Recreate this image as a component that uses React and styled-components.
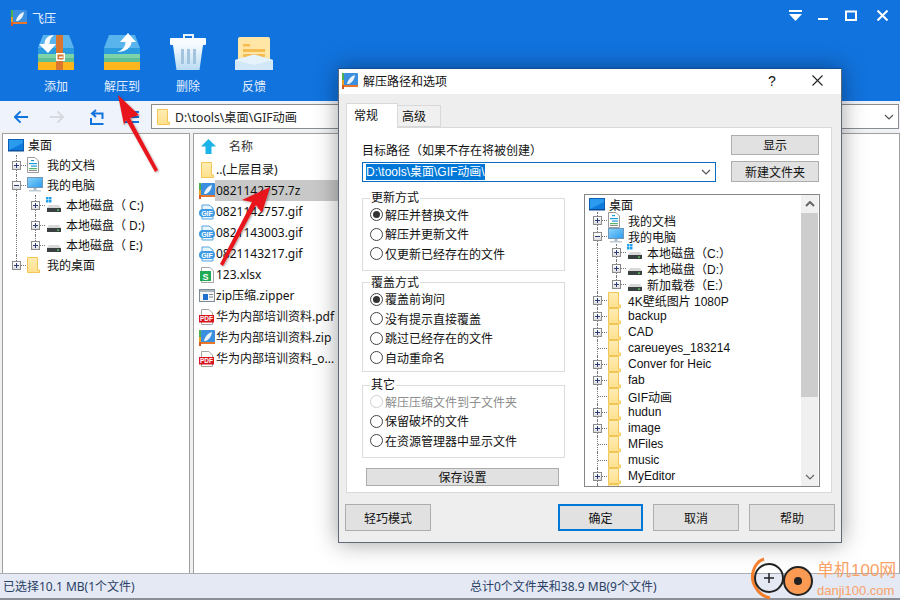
import React from 'react';
import styled, { createGlobalStyle } from 'styled-components';

const FONT = '"Noto Sans", "Noto Sans CJK SC", sans-serif';
const NARROW = '"Liberation Sans", "Noto Sans CJK SC", sans-serif';

const GlobalStyle = createGlobalStyle`
  html, body { margin: 0; padding: 0; background: #fff; }
  body { font-family: ${FONT}; font-size: 12px; color: #111; }
  * { box-sizing: border-box; }
`;

/* ---------- icons ---------- */

const ArchiveBody = () => (
  <>
    <path d="M5 2H31L36 15H0Z" fill="#59B3EC" />
    <rect x="0" y="15" width="36" height="6" fill="#2A9BDF" />
    <rect x="0" y="21" width="36" height="4" fill="#7FD3A8" />
    <rect x="0" y="25" width="36" height="4" fill="#5DBF95" />
    <rect x="0" y="29" width="36" height="8" fill="#FFB51E" />
  </>
);

const AddIcon = () => (
  <svg width="36" height="38" viewBox="0 0 36 38">
    <ArchiveBody />
    <rect x="18" y="2" width="7" height="35" fill="#D9762F" />
    <rect x="18" y="20" width="9" height="8" fill="#fff" />
    <rect x="19.5" y="21.5" width="6" height="5" fill="#D9762F" />
    <rect x="21" y="23.5" width="4" height="1.4" fill="#fff" />
    <path d="M16 2C10 2 6.500 6 6.500 11H1L10 20L18 11H11.500C11.500 7 13 4 16 2Z" fill="#fff" />
  </svg>
);

const ExtractIcon = () => (
  <svg width="36" height="38" viewBox="0 0 36 38">
    <ArchiveBody />
    <path d="M24 0L32 9H27.500C27.500 14 22 19 13 19C19 17 21.500 13 21.500 9H16Z" fill="#fff" />
  </svg>
);

const TrashIcon = () => (
  <svg width="36" height="38" viewBox="0 0 36 38">
    <defs>
      <linearGradient id="can" x1="0" y1="0" x2="0" y2="1">
        <stop offset="0" stopColor="#F4FAFE" />
        <stop offset="1" stopColor="#B9DBF3" />
      </linearGradient>
    </defs>
    <path d="M14 5V2H23V5" fill="none" stroke="#E9F4FC" strokeWidth="2" />
    <rect x="0" y="5" width="36" height="7" rx="1" fill="#F6FBFF" />
    <path d="M3 12H33L29.500 37H6.500Z" fill="url(#can)" />
    <rect x="11" y="16" width="3" height="15" fill="#A4C3DC" />
    <rect x="17" y="16" width="3" height="15" fill="#A4C3DC" />
    <rect x="23" y="16" width="3" height="15" fill="#A4C3DC" />
  </svg>
);

const FeedbackIcon = () => (
  <svg width="38" height="38" viewBox="0 0 38 38">
    <rect x="3" y="4" width="32" height="26" rx="2" fill="#FFE5A6" />
    <rect x="8" y="11" width="7" height="2.500" fill="#F5BC50" />
    <rect x="8" y="16" width="22" height="3" fill="#F5BC50" />
    <rect x="8" y="21" width="22" height="3" fill="#F5BC50" />
    <path d="M0 37V27L19 21.500L38 27V37Z" fill="#D2E8F9" />
    <path d="M0 27L19 21.500L38 27L19 32Z" fill="#F0F8FE" opacity=".7" />
  </svg>
);

const AppIcon = ({ size = 16 }) => (
  <svg width={size} height={size} viewBox="0 0 16 16">
    <rect x="0" y="0" width="2" height="7" fill="#4CB050" />
    <rect x="0" y="7" width="2" height="5" fill="#E9A21F" />
    <rect x="0" y="12" width="2" height="4" fill="#D85A22" />
    <rect x="2" y="0" width="14" height="14" rx="1" fill="#3C8FDE" />
    <rect x="2" y="12" width="14" height="2" fill="#E8762B" />
    <path d="M13 2C9 3 6 6.500 5 11C6 11 7 11 8 10.500C10.500 9 12.500 6 13 2Z" fill="#EAF4FC" />
  </svg>
);

const FolderIcon = () => (
  <svg width="13" height="16" viewBox="0 0 13 16">
    <defs>
      <linearGradient id="fold" x1="0" y1="0" x2="0" y2="1">
        <stop offset="0" stopColor="#FFEDB5" />
        <stop offset="1" stopColor="#FFE08C" />
      </linearGradient>
    </defs>
    <path d="M.5.500H10.500V13H12.500V15.500H.5Z" fill="url(#fold)" stroke="#F1C654" />
  </svg>
);

const DesktopIcon = () => (
  <svg width="16" height="13" viewBox="0 0 16 13">
    <rect x=".5" y=".5" width="15" height="11" fill="#2B9BF0" stroke="#0D5FB4" />
    <path d="M1 11L15 4V11Z" fill="#0E7BDC" />
    <rect x="0" y="11" width="16" height="1.500" fill="#0B4F99" />
  </svg>
);

const MonitorIcon = () => (
  <svg width="16" height="16" viewBox="0 0 16 16">
    <defs>
      <linearGradient id="scr" x1="0" y1="0" x2="1" y2="1">
        <stop offset="0" stopColor="#8AD4FA" />
        <stop offset="1" stopColor="#2B9BEE" />
      </linearGradient>
    </defs>
    <rect x=".5" y=".5" width="15" height="10" fill="url(#scr)" stroke="#6F97B8" />
    <rect x="6.500" y="11" width="3" height="2" fill="#A9B7C4" />
    <rect x="2" y="13" width="12" height="1.500" fill="#BFCAD4" />
  </svg>
);

const DocIcon = () => (
  <svg width="12" height="16" viewBox="0 0 12 16">
    <path d="M.5.500H8L11.500 4V15.500H.5Z" fill="#fff" stroke="#9A9A9A" />
    <rect x="4" y="3" width="3" height="1.200" fill="#1E9BDC" />
    <rect x="2" y="6" width="8" height="1.200" fill="#1E9BDC" />
    <rect x="4" y="8.500" width="6" height="1.200" fill="#1E9BDC" />
    <rect x="2" y="11" width="8" height="1.200" fill="#58B368" />
    <rect x="2" y="13" width="8" height="1" fill="#8A8A8A" />
  </svg>
);

const DriveIcon = ({ windows }) => (
  <svg width="16" height="16" viewBox="0 0 16 16">
    {windows && (
      <g fill="#1FA0EE">
        <rect x="0" y="0" width="2.500" height="2.500" />
        <rect x="3" y="0" width="2.500" height="2.500" />
        <rect x="0" y="3" width="2.500" height="2.500" />
        <rect x="3" y="3" width="2.500" height="2.500" />
      </g>
    )}
    <path d="M3 8H13L15 11H1Z" fill="#D8D8D8" />
    <rect x="1" y="11" width="14" height="4" fill="#3A3F42" />
    <rect x="11" y="12.500" width="2" height="1.200" fill="#5FDC6A" />
  </svg>
);

const GifIcon = () => (
  <svg width="16" height="16" viewBox="0 0 16 16">
    <path d="M3 1H10L14 4V15H3Z" fill="#E9F4FC" stroke="#55A5E0" />
    <rect x="0" y="5" width="16" height="8" rx="4" fill="#3C9BE4" />
    <text x="8" y="11.500" textAnchor="middle" fontSize="7" fontWeight="700" fontFamily="Liberation Sans" fill="#fff">GIF</text>
  </svg>
);

const SheetIcon = () => (
  <svg width="15" height="16" viewBox="0 0 15 16">
    <path d="M1.500.5H10L13.500 4V15.500H1.500Z" fill="#fff" stroke="#A5A5A5" />
    <rect x="0" y="4" width="11" height="10" fill="#1FAA54" />
    <text x="5.500" y="12.500" textAnchor="middle" fontSize="9" fontWeight="700" fontFamily="Liberation Sans" fill="#fff">S</text>
  </svg>
);

const ZipperIcon = () => (
  <svg width="16" height="13" viewBox="0 0 16 13">
    <rect x=".5" y=".5" width="15" height="12" fill="#F4F4F4" stroke="#7E8A96" />
    <rect x="1" y="1" width="14" height="2" fill="#A9B4BF" />
    <rect x="4" y="5" width="5" height="6" fill="#1E6FD0" />
    <rect x="10" y="5" width="4" height="1" fill="#7E8A96" />
    <rect x="10" y="7.500" width="4" height="1" fill="#7E8A96" />
  </svg>
);

const PdfIcon = () => (
  <svg width="16" height="16" viewBox="0 0 16 16">
    <path d="M2.500.5H10L13.500 4V15.500H2.500Z" fill="#fff" stroke="#A5A5A5" />
    <rect x="0" y="6" width="15" height="7.500" fill="#D8141C" />
    <text x="7.500" y="12.200" textAnchor="middle" fontSize="6.500" fontWeight="700" fontFamily="Liberation Sans" fill="#fff">PDF</text>
  </svg>
);

const UpArrowIcon = () => (
  <svg width="15" height="15" viewBox="0 0 15 15">
    <path d="M7.500 0L15 7.500H10.500V15H4.500V7.500H0Z" fill="#1CB3E8" />
  </svg>
);

const NavIcon = ({ kind }) => {
  const color = kind === 'forward' ? '#D6D9DE' : '#1173DE';
  if (kind === 'up') {
    return (
      <svg width="14" height="16" viewBox="0 0 14 16" fill="none" stroke={color} strokeWidth="2">
        <path d="M6 1L2 4.500L6 8M2 4.500H12.500V10" />
        <path d="M1 9V15H13.500" />
      </svg>
    );
  }
  if (kind === 'menu') {
    return (
      <svg width="14" height="14" viewBox="0 0 14 14" fill={color}>
        <rect x="0" y="1" width="14" height="2" />
        <rect x="0" y="6" width="14" height="2" />
        <rect x="0" y="11" width="14" height="2" />
      </svg>
    );
  }
  const d = kind === 'back' ? 'M7 1L1 7L7 13M1 7H15' : 'M9 1L15 7L9 13M15 7H1';
  return (
    <svg width="15" height="14" viewBox="0 0 16 14" fill="none" stroke={color} strokeWidth="2">
      <path d={d} />
    </svg>
  );
};

const Chevron = ({ up, color = '#555' }) => (
  <svg width="10" height="6" viewBox="0 0 10 6" fill="none" stroke={color} strokeWidth={up ? 2 : 1.200}>
    <path d={up ? 'M1 5L5 1L9 5' : 'M1 1L5 5L9 1'} />
  </svg>
);

/* ---------- main window ---------- */

const Page = styled.div`
  position: relative;
  width: 900px;
  height: 600px;
  overflow: hidden;
  display: flex;
  flex-direction: column;
  background: #f0f0f0;
`;

const Ribbon = styled.header`
  height: 101px;
  flex: none;
  background: #1173de;
  color: #fff;
  display: flex;
  flex-direction: column;
`;

const TitleBar = styled.div`
  height: 33px;
  flex: none;
  display: flex;
  align-items: center;
  padding: 3px 0 0 11px;
  gap: 5px;
`;

const TitleText = styled.span`
  color: #e8f2ff;
  flex: 1;
`;

const WinButtons = styled.div`
  display: flex;
  align-items: flex-start;
  align-self: flex-start;
  padding-top: 7px;
  padding-right: 12px;
`;

const WinButton = styled.svg`
  display: block;
  margin-left: ${(p) => p.$gap}px;
`;

const Tools = styled.div`
  display: flex;
  padding-left: 23px;
`;

const Tool = styled.div`
  width: 66px;
  display: flex;
  flex-direction: column;
  align-items: center;
  gap: 8px;
  color: #e6f0fc;
  svg { display: block; }
`;

const ToolLabel = styled.span`
  line-height: 16px;
`;

const AddressRow = styled.div`
  height: 30px;
  flex: none;
  display: flex;
  align-items: center;
  background: #eff3fb;
  padding: 1px 1px 0 0;
`;

const NavButton = styled.span`
  width: 35px;
  flex: none;
  display: flex;
  justify-content: center;
  margin-left: ${(p) => p.$gap || 0}px;
  svg { display: block; }
`;

const AddressBox = styled.div`
  flex: 1;
  margin-left: 2px;
  height: 25px;
  background: #fff;
  border: 1px solid #8c8c8c;
  display: flex;
  align-items: center;
  padding: 0 4px 0 5px;
  gap: 5px;
  svg { display: block; }
`;

const AddressText = styled.span`
  flex: 1;
  color: #222;
  font-size: 12.2px;
`;

const Panes = styled.div`
  flex: 1;
  min-height: 0;
  display: flex;
  gap: 3px;
  padding: 2px 0 0 2px;
  background: #f0f0f0;
`;

const Pane = styled.section`
  background: #fff;
  border: 1px solid #a0a0a0;
  border-bottom: 0;
  width: ${(p) => (p.$width ? `${p.$width}px` : 'auto')};
  flex: ${(p) => (p.$width ? 'none' : '1')};
  overflow: hidden;
`;

const TreeList = styled.div`
  padding: ${(p) => p.$pad};
`;

const Row = styled.div`
  display: flex;
  align-items: center;
  height: ${(p) => p.$height}px;
  white-space: nowrap;
`;

const Guide = styled.span`
  width: 19px;
  flex: none;
  align-self: stretch;
  position: relative;
  &::before {
    content: '';
    display: ${(p) => (p.$line ? 'block' : 'none')};
    position: absolute;
    left: 9px;
    top: 0;
    bottom: 0;
    border-left: 1px dotted #777;
  }
`;

const Branch = styled.span`
  width: 19px;
  flex: none;
  align-self: stretch;
  position: relative;
  &::before {
    content: '';
    position: absolute;
    left: 9px;
    top: 0;
    bottom: ${(p) => (p.$last ? '50%' : '0')};
    border-left: 1px dotted #777;
  }
  &::after {
    content: '';
    position: absolute;
    left: 10px;
    right: 0;
    top: 50%;
    border-top: 1px dotted #777;
  }
`;

const Toggle = styled.span`
  position: absolute;
  z-index: 1;
  left: 5px;
  top: calc(50% - 4px);
  width: 9px;
  height: 9px;
  border: 1px solid #8b8b8b;
  background: linear-gradient(#fff, #dedede);
  &::before {
    content: '';
    position: absolute;
    left: 1px;
    right: 1px;
    top: 3px;
    height: 1px;
    background: #2c3c78;
  }
  &::after {
    content: '';
    display: ${(p) => (p.$open ? 'none' : 'block')};
    position: absolute;
    top: 1px;
    bottom: 1px;
    left: 3px;
    width: 1px;
    background: #2c3c78;
  }
`;

const TreeIconCell = styled.span`
  width: 21px;
  flex: none;
  display: flex;
  padding-left: 1px;
  svg { display: block; }
`;

const TreeRow = ({ item, height }) => (
  <Row $height={height}>
    {(item.guides || []).map((on, i) => <Guide key={i} $line={on} />)}
    {item.branch && (
      <Branch $last={item.last}>
        {item.toggle && <Toggle $open={item.toggle === 'open'} />}
      </Branch>
    )}
    <TreeIconCell>{item.icon}</TreeIconCell>
    <span>{item.label}</span>
  </Row>
);

const ListHeader = styled.div`
  height: 24px;
  display: flex;
  align-items: center;
  padding-left: 7px;
  gap: 13px;
  color: #333;
  svg { display: block; }
`;

const FileList = styled.div`
  padding: 1px 0 0 5px;
`;

const FileRow = styled.div`
  height: 21px;
  display: flex;
  align-items: center;
  white-space: nowrap;
`;

const FileIconCell = styled.span`
  width: 16px;
  flex: none;
  display: flex;
  justify-content: center;
  svg { display: block; }
`;

const FileName = styled.span`
  padding-left: 1px;
  height: 21px;
  line-height: 21px;
  width: ${(p) => (p.$selected ? '300px' : 'auto')};
  background: ${(p) => (p.$selected ? '#c8c8c8' : 'transparent')};
`;

const StatusBar = styled.footer`
  height: 27px;
  flex: none;
  display: flex;
  align-items: center;
  background: #e4e9f4;
  border-top: 1px solid #a9adb4;
  border-bottom: 2px solid #8b9097;
  padding: 0 0 1px 3px;
  color: #2a3f66;
`;

const StatusText = styled.span`
  width: ${(p) => (p.$width ? `${p.$width}px` : 'auto')};
`;

/* ---------- dialog ---------- */

const Dialog = styled.div`
  position: absolute;
  left: 338px;
  top: 68px;
  width: 504px;
  height: 475px;
  background: #eeeeee;
  border: 1px solid #5e6a78;
  border-top-color: #0c4f96;
  box-shadow: 0 0 22px rgba(0, 0, 0, 0.38);
  display: flex;
  flex-direction: column;
`;

const DialogTitle = styled.div`
  height: 25px;
  flex: none;
  background: #fff;
  display: flex;
  align-items: center;
  padding: 0 0 2px 3px;
  gap: 5px;
  svg { display: block; }
`;

const DialogTitleText = styled.span`
  flex: 1;
`;

const HelpMark = styled.span`
  font-family: "Liberation Sans", sans-serif;
  font-size: 14px;
  width: 37px;
  margin-right: 2px;
  text-align: left;
`;

const CloseMark = styled.svg`
  margin-right: 18px;
`;

const DialogBody = styled.div`
  flex: 1;
  padding: 9px 9px 0 7px;
  display: flex;
  flex-direction: column;
`;

const Tabs = styled.div`
  display: flex;
  align-items: flex-end;
  height: 24px;
  flex: none;
  position: relative;
  z-index: 1;
`;

const Tab = styled.div`
  width: ${(p) => p.$width}px;
  height: ${(p) => (p.$active ? 25 : 22)}px;
  margin-bottom: ${(p) => (p.$active ? -1 : 0)}px;
  padding: ${(p) => (p.$active ? '0 0 2px 7px' : '0 0 0 4px')};
  background: ${(p) => (p.$active ? '#fff' : '#f0f0f0')};
  border: 1px solid #d9d9d9;
  border-bottom: ${(p) => (p.$active ? '0' : '1px solid #d9d9d9')};
  border-left: ${(p) => (p.$active ? '1px solid #d9d9d9' : '0')};
  display: flex;
  align-items: center;
`;

const TabPanel = styled.div`
  height: 366px;
  flex: none;
  width: 486px;
  background: #fff;
  border: 1px solid #d9d9d9;
  padding: 7px 0 0 15px;
`;

const TopRow = styled.div`
  display: flex;
  gap: 15px;
`;

const TargetCol = styled.div`
  width: 354px;
  padding-top: 9px;
`;

const TargetLabel = styled.div`
  line-height: 14px;
  margin-bottom: 4px;
`;

const Combo = styled.div`
  height: 20px;
  border: 1px solid #0b6cbf;
  display: flex;
  align-items: center;
  padding: 0 4px 0 3px;
  justify-content: space-between;
  svg { display: block; }
`;

const ComboSelection = styled.span`
  background: #0078d7;
  color: #fff;
  line-height: 16px;
  white-space: nowrap;
  font-family: ${NARROW};
`;

const SideButtons = styled.div`
  display: flex;
  flex-direction: column;
  width: 88px;
  gap: 6px;
`;

const Button = styled.div`
  height: ${(p) => p.$height || 20}px;
  width: ${(p) => (p.$width ? `${p.$width}px` : 'auto')};
  flex: none;
  background: #e1e1e1;
  border: ${(p) => (p.$primary ? '2px solid #0078d7' : '1px solid #adadad')};
  display: flex;
  align-items: center;
  justify-content: center;
  color: #111;
`;

const BottomRow = styled.div`
  display: flex;
  gap: 19px;
  margin-top: 9px;
`;

const OptionsCol = styled.div`
  width: 203px;
  display: flex;
  flex-direction: column;
`;

const Group = styled.fieldset`
  margin: ${(p) => p.$top}px 0 0;
  padding: 0 0 ${(p) => p.$bottom}px 7px;
  border: 1px solid #dcdcdc;
  min-width: 0;
`;

const Legend = styled.legend`
  padding: 0 1px;
  margin-left: 0;
  line-height: 14px;
`;

const Option = styled.div`
  height: 19.5px;
  display: flex;
  align-items: center;
  gap: 2px;
  color: ${(p) => (p.$disabled ? '#8d8d8d' : '#111')};
`;

const Radio = styled.span`
  width: 13px;
  height: 13px;
  flex: none;
  border-radius: 50%;
  border: 1px solid ${(p) => (p.$disabled ? '#cfcfcf' : '#444')};
  background: #fff;
  position: relative;
  &::after {
    content: '';
    display: ${(p) => (p.$checked ? 'block' : 'none')};
    position: absolute;
    inset: 2px;
    border-radius: 50%;
    background: #333;
  }
`;

const SaveButton = styled(Button)`
  margin: 10.5px 6px 0 4px;
`;

const FolderTree = styled.div`
  width: 236px;
  height: 293px;
  margin-top: 3px;
  border: 1px solid #858585;
  display: flex;
  overflow: hidden;
  font-family: ${NARROW};
`;

const FolderTreeInner = styled.div`
  flex: 1;
  min-width: 0;
  overflow: hidden;
`;

const ScrollBar = styled.div`
  width: 17px;
  flex: none;
  margin-right: 1px;
  background: #f0f0f0;
  display: flex;
  flex-direction: column;
  svg { display: block; }
`;

const ScrollEnd = styled.div`
  height: 18px;
  flex: none;
  display: flex;
  align-items: center;
  justify-content: center;
`;

const ScrollTrack = styled.div`
  flex: 1;
`;

const ScrollThumb = styled.div`
  height: 184px;
  background: #cdcdcd;
`;

const DialogFooter = styled.div`
  flex: 1;
  display: flex;
  align-items: flex-start;
  gap: 10px;
  padding-top: 11px;
  margin-left: -1px;
`;

const Spacer = styled.span`
  width: 107px;
  flex: none;
`;

/* ---------- overlays ---------- */

const Annotations = styled.svg`
  position: absolute;
  left: 0;
  top: 0;
  width: 900px;
  height: 600px;
  pointer-events: none;
`;

const Watermark = styled.div`
  position: absolute;
  left: 750px;
  top: 556px;
  display: flex;
  align-items: flex-start;
  svg { display: block; }
`;

const WatermarkText = styled.div`
  margin-left: 1px;
  color: #f9a268;
  display: flex;
  flex-direction: column;
  font-family: "Liberation Sans", "Noto Sans CJK SC", sans-serif;
`;

const WatermarkTitle = styled.span`
  font-size: 17px;
  line-height: 22px;
  margin-top: 4px;
  white-space: nowrap;
`;

const WatermarkUrl = styled.span`
  font-size: 13px;
  line-height: 16px;
  margin-top: 1px;
  white-space: nowrap;
`;

/* ---------- data ---------- */

const sideTree = [
  { icon: <DesktopIcon />, label: '桌面' },
  { branch: true, toggle: 'closed', icon: <DocIcon />, label: '我的文档' },
  { branch: true, toggle: 'open', icon: <MonitorIcon />, label: '我的电脑' },
  { guides: [true], branch: true, toggle: 'closed', icon: <DriveIcon windows />, label: '本地磁盘（ C:)' },
  { guides: [true], branch: true, toggle: 'closed', icon: <DriveIcon />, label: '本地磁盘（ D:)' },
  { guides: [true], branch: true, last: true, toggle: 'closed', icon: <DriveIcon />, label: '本地磁盘（ E:)' },
  { branch: true, last: true, toggle: 'closed', icon: <FolderIcon />, label: '我的桌面' },
];

const folder = (label, toggle) => ({ branch: true, toggle, icon: <FolderIcon />, label });

const dialogTree = [
  { icon: <DesktopIcon />, label: '桌面' },
  { branch: true, toggle: 'closed', icon: <DocIcon />, label: '我的文档' },
  { branch: true, toggle: 'open', icon: <MonitorIcon />, label: '我的电脑' },
  { guides: [true], branch: true, toggle: 'closed', icon: <DriveIcon windows />, label: '本地磁盘（C:）' },
  { guides: [true], branch: true, toggle: 'closed', icon: <DriveIcon />, label: '本地磁盘（D:）' },
  { guides: [true], branch: true, last: true, toggle: 'closed', icon: <DriveIcon />, label: '新加载卷（E:）' },
  folder('4K壁纸图片 1080P', 'closed'),
  folder('backup', 'closed'),
  folder('CAD', 'closed'),
  folder('careueyes_183214'),
  folder('Conver for Heic', 'closed'),
  folder('fab', 'closed'),
  folder('GIF动画'),
  folder('hudun', 'closed'),
  folder('image', 'closed'),
  folder('MFiles'),
  folder('music'),
  folder('MyEditor', 'closed'),
  folder(''),
];

const files = [
  { icon: <FolderIcon />, name: '..(上层目录)' },
  { icon: <AppIcon />, name: '0821142757.7z', selected: true },
  { icon: <GifIcon />, name: '0821142757.gif' },
  { icon: <GifIcon />, name: '0821143003.gif' },
  { icon: <GifIcon />, name: '0821143217.gif' },
  { icon: <SheetIcon />, name: '123.xlsx' },
  { icon: <ZipperIcon />, name: 'zip压缩.zipper' },
  { icon: <PdfIcon />, name: '华为内部培训资料.pdf' },
  { icon: <AppIcon />, name: '华为内部培训资料.zip' },
  { icon: <PdfIcon />, name: '华为内部培训资料_o...' },
];

const groups = [
  {
    title: '更新方式', top: 0, bottom: 6,
    options: [{ text: '解压并替换文件', checked: true }, { text: '解压并更新文件' }, { text: '仅更新已经存在的文件' }],
  },
  {
    title: '覆盖方式', top: 5, bottom: 3,
    options: [{ text: '覆盖前询问', checked: true }, { text: '没有提示直接覆盖' }, { text: '跳过已经存在的文件' }, { text: '自动重命名' }],
  },
  {
    title: '其它', top: 6.5, bottom: 6,
    options: [{ text: '解压压缩文件到子文件夹', disabled: true }, { text: '保留破坏的文件' }, { text: '在资源管理器中显示文件' }],
  },
];

const tools = [
  { icon: <AddIcon />, label: '添加' },
  { icon: <ExtractIcon />, label: '解压到' },
  { icon: <TrashIcon />, label: '删除' },
  { icon: <FeedbackIcon />, label: '反馈' },
];

export default function App() {
  return (
    <Page>
      <GlobalStyle />
      <Ribbon>
        <TitleBar>
          <AppIcon size={16} />
          <TitleText>飞压</TitleText>
          <WinButtons>
            <WinButton $gap={0} width="13" height="12" viewBox="0 0 13 12" fill="#fff">
              <rect x="0" y="0" width="13" height="2" />
              <path d="M0 4H13L6.500 11Z" />
            </WinButton>
            <WinButton $gap={16} width="10" height="12" viewBox="0 0 10 12" fill="#fff">
              <rect x="0" y="8" width="10" height="2" />
            </WinButton>
            <WinButton $gap={17} width="12" height="11" viewBox="0 0 12 11" fill="none" stroke="#fff">
              <rect x="1" y="1.500" width="10" height="8.500" strokeWidth="2" />
            </WinButton>
            <WinButton $gap={20} width="11" height="11" viewBox="0 0 11 11" fill="none" stroke="#fff" strokeWidth="2">
              <path d="M.5.500L10.500 10.500M10.500.5L.5 10.500" />
            </WinButton>
          </WinButtons>
        </TitleBar>
        <Tools>
          {tools.map((t) => (
            <Tool key={t.label}>
              {t.icon}
              <ToolLabel>{t.label}</ToolLabel>
            </Tool>
          ))}
        </Tools>
      </Ribbon>

      <AddressRow>
        <NavButton $gap={4}><NavIcon kind="back" /></NavButton>
        <NavButton><NavIcon kind="forward" /></NavButton>
        <NavButton $gap={5}><NavIcon kind="up" /></NavButton>
        <NavButton><NavIcon kind="menu" /></NavButton>
        <AddressBox>
          <FolderIcon />
          <AddressText>D:\tools\桌面\GIF动画</AddressText>
          <Chevron />
        </AddressBox>
      </AddressRow>

      <Panes>
        <Pane $width={188}>
          <TreeList $pad="1px 0 0 4px">
            {sideTree.map((item) => <TreeRow key={item.label} item={item} height={20} />)}
          </TreeList>
        </Pane>
        <Pane>
          <ListHeader>
            <UpArrowIcon />
            <span>名称</span>
          </ListHeader>
          <FileList>
            {files.map((f) => (
              <FileRow key={f.name}>
                <FileIconCell>{f.icon}</FileIconCell>
                <FileName $selected={f.selected}>{f.name}</FileName>
              </FileRow>
            ))}
          </FileList>
        </Pane>
      </Panes>

      <StatusBar>
        <StatusText $width={467}>已选择10.1 MB(1个文件)</StatusText>
        <StatusText>总计0个文件夹和38.9 MB(9个文件)</StatusText>
      </StatusBar>

      <Annotations viewBox="0 0 900 600">
        <defs>
          <filter id="arrowShadow" x="-20%" y="-20%" width="140%" height="140%">
            <feDropShadow dx="1" dy="1" stdDeviation="1" floodColor="#000" floodOpacity=".35" />
          </filter>
        </defs>
        <g fill="#e8161b" filter="url(#arrowShadow)">
          <path d="M118 95L139 115L130 118L158 170L155 172L126 120L124 125Z" />
          <path d="M270 187L262 213L256 205L223 266L220 264L252 202L242 200Z" />
        </g>
      </Annotations>

      <Dialog>
        <DialogTitle>
          <AppIcon size={16} />
          <DialogTitleText>解压路径和选项</DialogTitleText>
          <HelpMark>?</HelpMark>
          <CloseMark width="11" height="11" viewBox="0 0 11 11" fill="none" stroke="#222" strokeWidth="1.100">
            <path d="M.5.500L10.500 10.500M10.500.5L.5 10.500" />
          </CloseMark>
        </DialogTitle>
        <DialogBody>
          <Tabs>
            <Tab $active $width={52}>常规</Tab>
            <Tab $width={43}>高级</Tab>
          </Tabs>
          <TabPanel>
            <TopRow>
              <TargetCol>
                <TargetLabel>目标路径（如果不存在将被创建）</TargetLabel>
                <Combo>
                  <ComboSelection>D:\tools\桌面\GIF动画\</ComboSelection>
                  <Chevron />
                </Combo>
              </TargetCol>
              <SideButtons>
                <Button>显示</Button>
                <Button $height={21}>新建文件夹</Button>
              </SideButtons>
            </TopRow>
            <BottomRow>
              <OptionsCol>
                {groups.map((g) => (
                  <Group key={g.title} $top={g.top} $bottom={g.bottom}>
                    <Legend>{g.title}</Legend>
                    {g.options.map((o) => (
                      <Option key={o.text} $disabled={o.disabled}>
                        <Radio $checked={o.checked} $disabled={o.disabled} />
                        {o.text}
                      </Option>
                    ))}
                  </Group>
                ))}
                <SaveButton $height={18}>保存设置</SaveButton>
              </OptionsCol>
              <FolderTree>
                <FolderTreeInner>
                  <TreeList $pad="1px 0 0 3px">
                    {dialogTree.map((item, i) => <TreeRow key={i} item={item} height={16} />)}
                  </TreeList>
                </FolderTreeInner>
                <ScrollBar>
                  <ScrollEnd><Chevron up color="#666" /></ScrollEnd>
                  <ScrollTrack><ScrollThumb /></ScrollTrack>
                  <ScrollEnd><Chevron up={false} color="#666" /></ScrollEnd>
                </ScrollBar>
              </FolderTree>
            </BottomRow>
          </TabPanel>
          <DialogFooter>
            <Button $width={86} $height={27}>轻巧模式</Button>
            <Spacer />
            <Button $primary $width={85} $height={27}>确定</Button>
            <Button $width={86} $height={27}>取消</Button>
            <Button $width={86} $height={27}>帮助</Button>
          </DialogFooter>
        </DialogBody>
      </Dialog>

      <Watermark>
        <svg width="66" height="44" viewBox="0 0 66 44">
          <path d="M14 3C3 7 -1 22 6 32C9 37 14 41 20 42" fill="none" stroke="#f57f2c" strokeWidth="3" />
          <circle cx="19" cy="22" r="14" fill="none" stroke="#222" strokeWidth="2" />
          <path d="M14 22H24M19 17V27" stroke="#222" strokeWidth="1.500" />
          <circle cx="48" cy="25" r="14" fill="#fb9a52" stroke="#222" strokeWidth="2" />
          <circle cx="48" cy="25" r="4" fill="#222" />
        </svg>
        <WatermarkText>
          <WatermarkTitle>单机100网</WatermarkTitle>
          <WatermarkUrl>danji100.com</WatermarkUrl>
        </WatermarkText>
      </Watermark>
    </Page>
  );
}
